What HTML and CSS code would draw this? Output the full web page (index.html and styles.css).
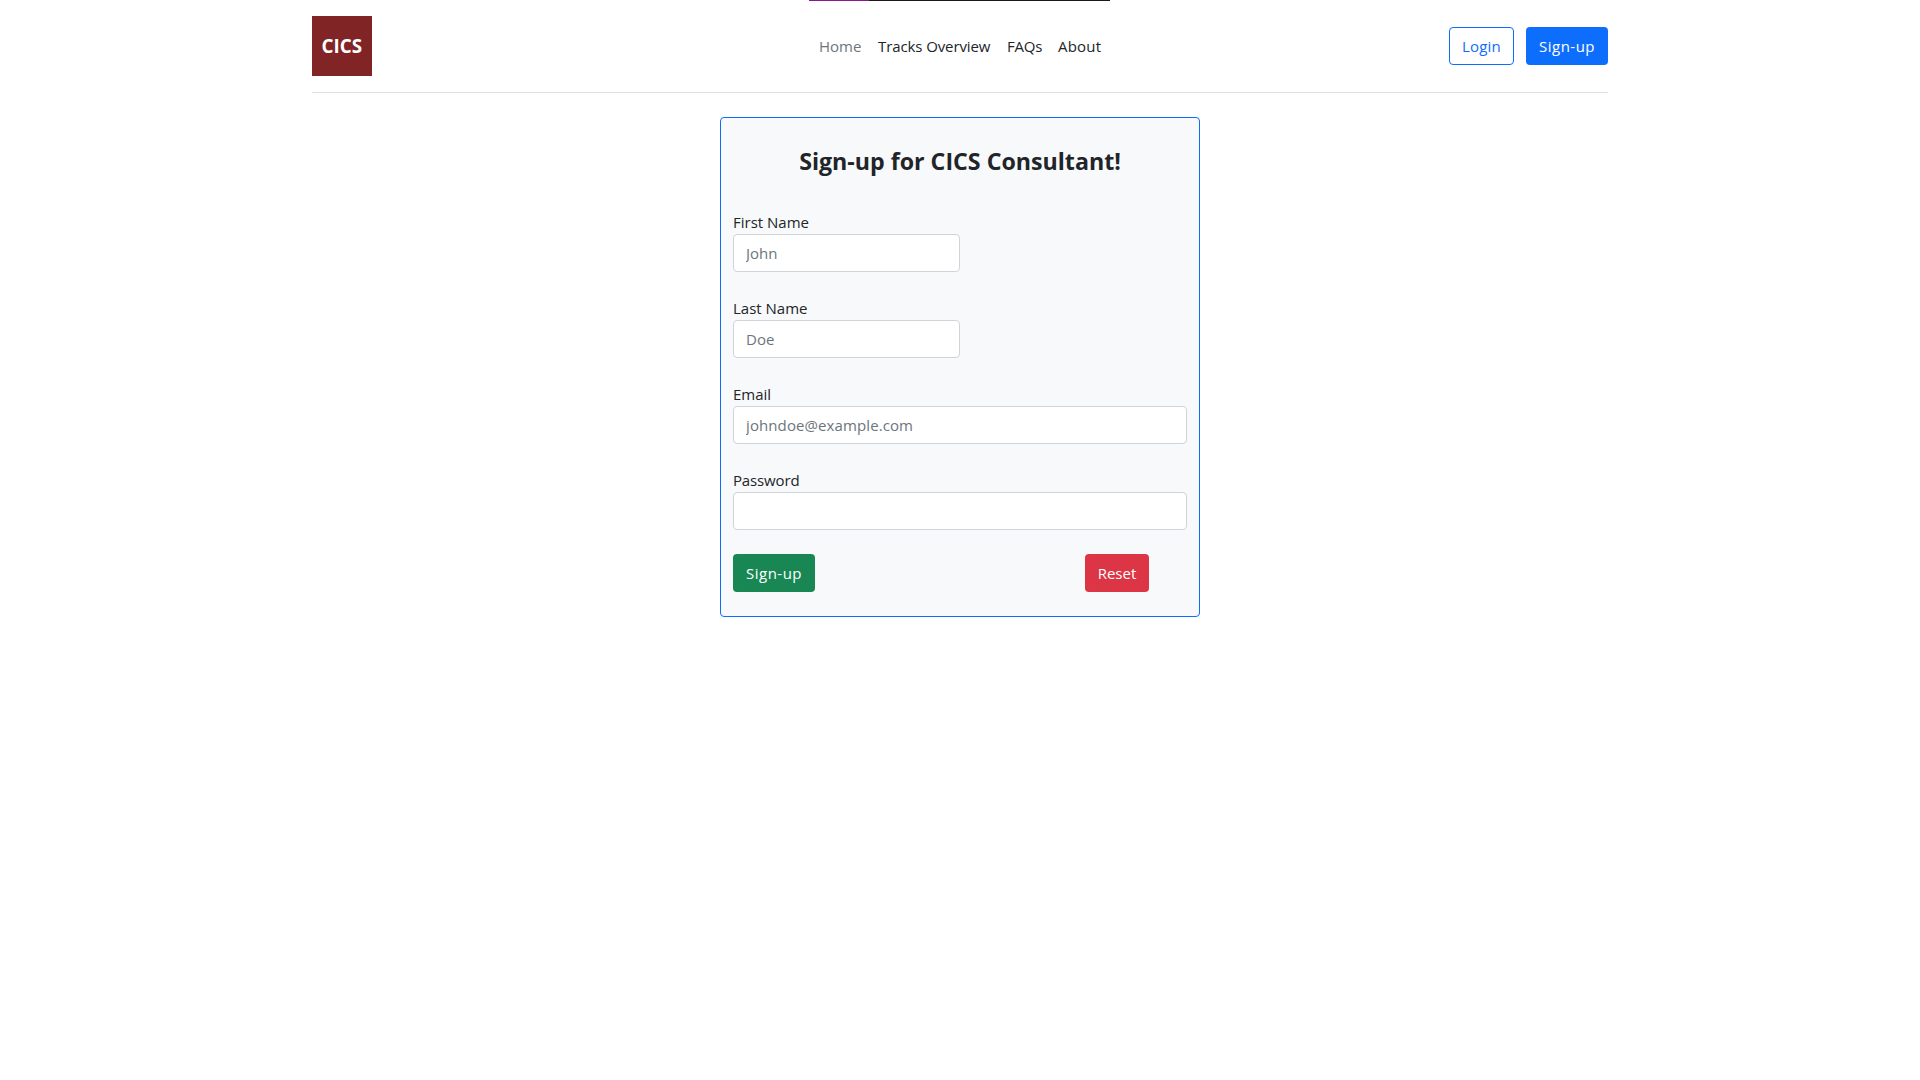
FILE: index.html
```html
<!DOCTYPE html>
<html lang="en">
<head>
<meta charset="utf-8">
<title>Sign-up</title>
<link rel="stylesheet" href="styles.css">
</head>
<body>
<div class="share-bar"></div>
<div class="container">
  <header class="header">
    <a class="brand"><svg width="60" height="60" viewBox="0 0 60 60"><rect width="60" height="60" fill="#812426"/><text class="brand-text" x="9.6" y="37" textLength="40.5" lengthAdjust="spacingAndGlyphs">CICS</text></svg></a>
    <nav class="nav">
      <a class="link home">Home</a>
      <a class="link tracks">Tracks Overview</a>
      <a class="link faqs">FAQs</a>
      <a class="link about">About</a>
    </nav>
    <div class="actions">
      <button class="btn btn-outline">Login</button>
      <button class="btn btn-primary">Sign-up</button>
    </div>
  </header>
</div>
<form class="card">
  <h1 class="title">Sign-up for CICS Consultant!</h1>
  <div class="field half"><label class="label">First Name</label><input class="input" type="text" placeholder="John"></div>
  <div class="field half"><label class="label">Last Name</label><input class="input" type="text" placeholder="Doe"></div>
  <div class="field"><label class="label">Email</label><input class="input email" type="email" placeholder="johndoe@example.com"></div>
  <div class="field"><label class="label password">Password</label><input class="input" type="password"></div>
  <div class="buttons">
    <button class="btn btn-success" type="button">Sign-up</button>
    <button class="btn btn-danger" type="button">Reset</button>
  </div>
</form>
</body>
</html>
```
FILE: styles.css
```css
* { box-sizing: border-box; }
body {
  margin: 0;
  background: #fff;
  color: #212529;
  font: 15px/24px "Open Sans", "Noto Sans", sans-serif;
}
.share-bar {
  position: absolute;
  top: 0;
  left: 809px;
  width: 301px;
  height: 1px;
  background: linear-gradient(90deg, #881798 60px, #1b1a19 60px);
}
.container { width: 1296px; margin: 0 auto; }
.header {
  display: grid;
  grid-template-columns: 1fr auto 1fr;
  align-items: center;
  height: 93px;
  border-bottom: 1px solid #dee2e6;
}
.brand, .brand svg { display: block; }
.brand-text { fill: #fff; font: 700 19px "Open Sans", sans-serif; }
.nav { display: flex; padding-left: 1px; }
.link { padding: 0 8px; white-space: nowrap; }
.home { width: 59px; color: #6c757d; }
.tracks { width: 129px; letter-spacing: -0.1px; }
.faqs { width: 51px; letter-spacing: -0.2px; }
.about { width: 60px; letter-spacing: 0.2px; }
.actions { display: flex; justify-content: flex-end; gap: 12px; }
.btn {
  height: 38px;
  padding: 0;
  border: 1px solid transparent;
  border-radius: 4px;
  color: #fff;
  font: inherit;
  white-space: nowrap;
}
.btn-outline { width: 65px; border-color: #0d6efd; background: #fff; color: #0d6efd; letter-spacing: 0.2px; }
.btn-primary { width: 82px; background: #0d6efd; letter-spacing: 0.5px; }
.btn-success { width: 82px; background: #198754; letter-spacing: 0.5px; }
.btn-danger { width: 64px; background: #dc3545; }
.card {
  width: 480px;
  height: 500px;
  margin: 24px auto 0;
  padding: 24px 12px;
  border: 1px solid #0d6efd;
  border-radius: 4px;
  background: #f8f9fa;
}
.title {
  margin: 0 0 34px;
  padding-top: 5px;
  font-size: 23.2px;
  font-weight: 700;
  line-height: 29px;
  text-align: center;
}
.field { display: flex; flex-direction: column; margin-bottom: 24px; }
.half { width: 227px; }
.label { height: 24px; align-self: flex-start; white-space: nowrap; }
.password { letter-spacing: -0.15px; }
.input {
  width: 100%;
  height: 38px;
  padding: 6px 12px;
  border: 1px solid #ced4da;
  border-radius: 4px;
  background: #fff;
  color: #212529;
  font: inherit;
}
.email { letter-spacing: 0.1px; }
.input::placeholder { color: #6c757d; opacity: 1; }
.buttons { display: flex; justify-content: space-between; padding-right: 38px; }
```
